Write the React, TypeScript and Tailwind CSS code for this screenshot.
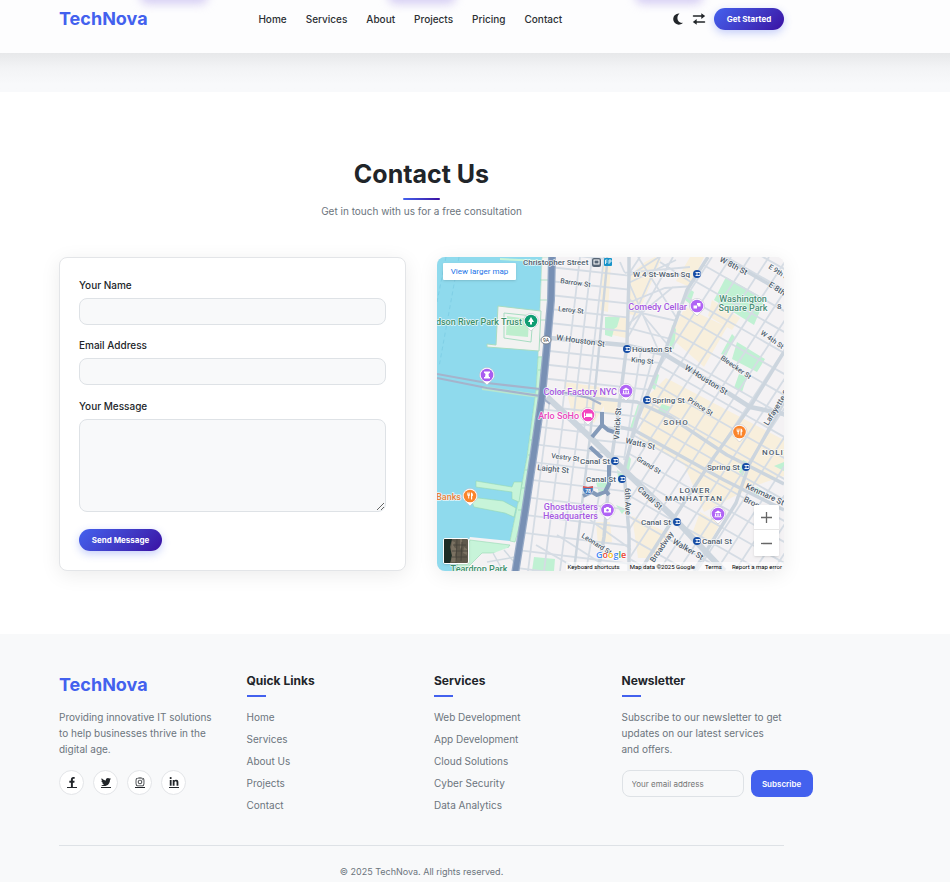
import React from "react";
import { FaFacebookF, FaTwitter, FaInstagram, FaLinkedinIn } from "react-icons/fa";

const navItems = ["Home", "Services", "About", "Projects", "Pricing", "Contact"];
const quickLinks = ["Home", "Services", "About Us", "Projects", "Contact"];
const services = ["Web Development", "App Development", "Cloud Solutions", "Cyber Security", "Data Analytics"];
const socials = [
  { name: "Facebook", Icon: FaFacebookF },
  { name: "Twitter", Icon: FaTwitter },
  { name: "Instagram", Icon: FaInstagram },
  { name: "LinkedIn", Icon: FaLinkedinIn },
];

function MoonIcon() {
  return (
    <svg viewBox="0 0 11 12" className="h-3 w-[11px]" aria-hidden="true">
      <path d="M6.500.5A5.600 5.600 0 1 0 10 9.800C6.800 10.300 4.400 8.300 4.400 5.300 4.400 3.200 5.200 1.500 6.500.5z" fill="currentColor" />
    </svg>
  );
}

function SwapIcon() {
  return (
    <svg viewBox="0 0 14 12" className="h-3 w-3.5" aria-hidden="true">
      <path d="M1.500 3.100H10M4 8.900h8.500" stroke="currentColor" strokeWidth="1.500" strokeLinecap="round" />
      <path d="M9.300.3 13.200 3.100 9.300 5.900zM4.700 6.100.8 8.900l3.900 2.800z" fill="currentColor" />
    </svg>
  );
}

function Header() {
  return (
    <header className="relative bg-[#fdfdfe] pb-[23px] pl-[59px] pr-[166px] pt-2">
      <div className="pointer-events-none absolute inset-x-0 top-0 h-8 overflow-hidden" aria-hidden="true">
        <div className="absolute -top-3 left-[140px] h-4 w-[68px] rounded-full bg-[#d5cdf3] blur-[5px]" />
        <div className="absolute -top-3 left-[388px] h-4 w-[68px] rounded-full bg-[#d5cdf3] blur-[5px]" />
        <div className="absolute -top-3 left-[635px] h-4 w-[68px] rounded-full bg-[#d5cdf3] blur-[5px]" />
      </div>
      <div className="relative flex h-[22px] items-center justify-between">
        <a href="#home" className="text-lg font-bold leading-[22px] text-[#4361ee]">TechNova</a>
        <nav className="flex gap-[19px] text-[10px] font-medium text-[#2b2f33]">
          {navItems.map((n) => (
            <a key={n} href={"#" + n.toLowerCase()}>{n}</a>
          ))}
        </nav>
        <div className="flex items-center gap-2">
          <button aria-label="Toggle dark mode"><MoonIcon /></button>
          <button aria-label="Switch direction"><SwapIcon /></button>
          <button className="h-[22px] w-[70px] rounded-full bg-linear-135 from-[#4361ee] to-[#3a0ca3] text-[8px] font-bold text-white shadow-[0_3px_8px_rgba(67,97,238,0.3)]">
            Get Started
          </button>
        </div>
      </div>
    </header>
  );
}

const range = (from: number, to: number, step: number) => {
  const out: number[] = [];
  for (let v = from; v <= to; v += step) out.push(v);
  return out;
};

type Label = { x: number; y: number; t: string; r?: number; s?: number; c?: string; a?: "start" | "middle" | "end"; sp?: boolean };

const labels: Label[] = [
  { x: 523, y: 265, t: "Christopher Street", s: 8 },
  { x: 560, y: 283, t: "Barrow St", r: 8, s: 7 },
  { x: 558, y: 311, t: "Leroy St", r: 6, s: 7 },
  { x: 556, y: 340, t: "W Houston St", r: 8, s: 8 },
  { x: 633, y: 277, t: "W 4 St-Wash Sq", s: 8 },
  { x: 632, y: 352, t: "Houston St", s: 8 },
  { x: 631, y: 362, t: "King St", r: 5, s: 7 },
  { x: 684, y: 369, t: "W Houston St", r: 32, s: 8 },
  { x: 652, y: 403, t: "Spring St", s: 8 },
  { x: 687, y: 401, t: "Prince St", r: 32, s: 7 },
  { x: 720, y: 359, t: "Bleecker St", r: 35, s: 7 },
  { x: 760, y: 334, t: "W 4th St", r: 35, s: 7 },
  { x: 719, y: 261, t: "W 8th St", r: 28, s: 8 },
  { x: 768, y: 268, t: "E 9th St", r: 33, s: 7 },
  { x: 768, y: 286, t: "E 8th St", r: 33, s: 8 },
  { x: 777, y: 309, t: "8", s: 8 },
  { x: 768, y: 426, t: "Lafayette St", r: -58, s: 8 },
  { x: 619, y: 440, t: "Varick St", r: -86, s: 8 },
  { x: 625, y: 443, t: "Watts St", r: 13, s: 8 },
  { x: 636, y: 460, t: "Grand St", r: 32, s: 7 },
  { x: 637, y: 490, t: "Canal St", r: 42, s: 8 },
  { x: 625, y: 488, t: "6th Ave", r: 89, s: 8 },
  { x: 551, y: 458, t: "Vestry St", r: 7, s: 7 },
  { x: 537, y: 470, t: "Laight St", r: 6, s: 8 },
  { x: 580, y: 464, t: "Canal St", s: 8 },
  { x: 586, y: 482, t: "Canal St", s: 8 },
  { x: 641, y: 525, t: "Canal St", s: 8 },
  { x: 702, y: 544, t: "Canal St", s: 8 },
  { x: 707, y: 470, t: "Spring St", s: 8 },
  { x: 745, y: 488, t: "Kenmare St", r: 25, s: 8 },
  { x: 743, y: 501, t: "Broome", r: 27, s: 8 },
  { x: 654, y: 563, t: "Broadway", r: -56, s: 8 },
  { x: 672, y: 543, t: "Walker St", r: 30, s: 8 },
  { x: 581, y: 537, t: "Leonard St", r: 32, s: 7 },
  { x: 676, y: 425, t: "SOHO", s: 8, a: "middle", sp: true },
  { x: 762, y: 455, t: "NOLITA", s: 8, sp: true },
  { x: 695, y: 493, t: "LOWER", s: 8, a: "middle", sp: true },
  { x: 694, y: 501, t: "MANHATTAN", s: 8, a: "middle", sp: true },
  { x: 522, y: 325, t: "Hudson River Park Trust", c: "#3c8f6b", a: "end" },
  { x: 743, y: 302, t: "Washington", c: "#4b8f77", a: "middle" },
  { x: 743, y: 311, t: "Square Park", c: "#4b8f77", a: "middle" },
  { x: 479, y: 572, t: "Teardrop Park", c: "#3c8f6b", a: "middle" },
  { x: 687, y: 310, t: "Comedy Cellar", c: "#a557e0", a: "end" },
  { x: 617, y: 395, t: "Color Factory NYC", c: "#a557e0", a: "end" },
  { x: 579, y: 419, t: "Arlo SoHo", c: "#ea45bd", a: "end" },
  { x: 598, y: 510, t: "Ghostbusters", c: "#a557e0", a: "end" },
  { x: 598, y: 519, t: "Headquarters", c: "#a557e0", a: "end" },
  { x: 461, y: 500, t: "Banks", c: "#e8813a", a: "end" },
];

function Pin({ x, y, color, children }: { x: number; y: number; color: string; children: React.ReactNode }) {
  return (
    <g transform={`translate(${x} ${y})`}>
      <path d="M-7.500 0a7.500 7.500 0 1 1 15 0c0 4-4 6-7.500 10C-3.500 6-7.500 4-7.500 0z" fill="#fff" stroke="#b9b9c4" strokeWidth=".5" />
      <circle r="6.300" fill={color} />
      <g fill="#fff">{children}</g>
    </g>
  );
}

const museum = <path d="M-3.500-1 0-3.500 3.500-1zM-3-.5h1.200v2.500H-3zM-.6-.5H.6V2H-.6zM1.800-.5H3V2H1.800zM-3.500 2.300h7v1h-7z" />;
const fork = <path d="M-2.800-3.500h.6v2h.5v-2h.6v2h.5v-2h.6v2.800l-.8.6v2.600h-1V-.1l-1-.6zM1-3.500c1.500 0 2 1.500 2 3L2.200.3v3.200H1z" />;

function MapDrawing() {
  return (
    <svg viewBox="437 257 347 314" preserveAspectRatio="xMidYMid slice" className="absolute inset-0 h-full w-full" role="img" aria-label="Map of Lower Manhattan">
      <defs>
        <clipPath id="west"><path d="M550 257H607L629 277 627 344 664 354 637 420 624 470 547 397z" /></clipPath>
        <clipPath id="village"><path d="M607 257H708L687 290 664 354 627 344 629 277z" /></clipPath>
        <clipPath id="southwest"><path d="M540 390 624 470 629 534 634 571H512z" /></clipPath>
        <clipPath id="east"><path d="M708 257H784V571H632L624 470 637 420 664 354 687 290z" /></clipPath>
      </defs>
      <rect x="437" y="257" width="347" height="314" fill="#f4f2f4" />

      {/* Built-up blocks */}
      <g fill="#f8efdc">
        <path d="M603 262l8 0-3 50-8-2zM608 316l18 2 0 20-18-4zM645 262l10-5 6 3-24 56-8-2 2-40zM690 257l14 0-14 30-14-6z" />
        <path d="M685 307l42 20-23 40-34-30zM712 300l28 18-8 12-24-14z" />
        <path d="M666 378l118 62v36l-30 10-50 26-20-48-45-24 5-40z" />
        <path d="M564 382l36 5 8 12-14 24-22-10zM604 400l14 2-2 14-12-4zM632 516l38 18-14 24h-18zM700 512l20 12-10 18-18-8zM596 522h14l2 20-14 4z" />
      </g>

      {/* Parks */}
      <g fill="#c0f1d3">
        <path d="M726 277l39 22-11 26-40-25zM737 342l28 17-8 13-25-13zM739 374l8 3-5 15-8-4zM732 334l3 3-9 19-5-2z" />
        <path d="M605 317l15 0-3 10-3 2-2 8-7-2zM688 288l6 4-4 12-5-4zM672 325l4 4-2 20-5-2zM655 372l4 3-4 15-3-2zM662 404l9 3-7 8-6-5zM743 460l4 2-4 14-4-4zM757 487l5 4-5 7-5-4zM596 482l10-2 2 10-8 7zM534 557l21 2-1 12h-22zM774 466l10-4v9z" />
        <path d="M638 404l5 2-8 24-5-2zM628 455l3 4-2 12-5-4zM617 470l8 5-6 9zM616 505l10 4-4 5z" />
      </g>

      {/* Street grids */}
      <g fill="none" stroke="#d5dce4" strokeWidth="1.800">
        <g clipPath="url(#west)">
          {range(256, 470, 14).map((y) => <path key={y} d={`M540 ${y - 4}L670 ${y + 10}`} />)}
          {range(560, 584, 12).map((x) => <path key={x} d={`M${x + 20} 257L${x} 430`} />)}
          <path d="M641 350L624 460M655 350L630 440" />
        </g>
        <g clipPath="url(#village)">
          <path d="M607 290l52-33M610 292l66-32M611 310l54-22 30-2M615 335l58-48M640 257l-20 30M660 257l-31 70M673 257l-45 80" />
          <path d="M620 262l40 92M638 257l38 60M605 305l90 20M605 322l85 22M622 290l50 60M600 275l90-8M660 262l40 26" />
        </g>
        <g clipPath="url(#southwest)">
          {range(404, 600, 18).map((y) => <path key={y} d={`M500 ${y}L640 ${y + 17}`} />)}
          {range(538, 580, 16).map((x) => <path key={x} d={`M${x + 13} 390L${x - 10} 571`} />)}
          <path d="M536 545l60 35M557 535l70 45M590 520l45 32M600 490l-14 81" />
        </g>
        <g clipPath="url(#east)">
          {range(80, 620, 21).map((y) => <path key={y} d={`M600 ${y}L800 ${y + 114}`} />)}
          {range(600, 940, 19).map((x) => <path key={x} d={`M${x + 55} 257L${x - 150} 571`} />)}
        </g>
      </g>

      {/* Main roads */}
      <g fill="none" stroke="#ccd5de" strokeWidth="3.500" strokeLinejoin="round">
        <path d="M550 338l74 7 40 9 50 30 36 23 34 7" strokeWidth="4.500" />
        <path d="M547 397l43 40 34 33 46 44 54 57" strokeWidth="6" />
        <path d="M708 257l-21 33-23 64-27 66-13 50 5 64 0 37" />
        <path d="M629 257l0 20-2 67-8 63-9 63-6 67-6 34" />
        <path d="M607 257l0 7-10 106-7 67-16 134" strokeWidth="2.500" />
        <path d="M784 352l-34 55-36 50-44 67-30 47" />
        <path d="M590 398l47 4 33 15 57 38 57 29M614 426l20 4 36 20 54 30 60 30M722 257l62 36M784 402l-35 63-13 38-42 68" />
      </g>
      <g fill="none" stroke="#849ab9" strokeWidth="4" strokeLinejoin="round">
        <path d="M602 412v13l-10 12M602 425l6 5 6 2M590 447l12 11M609 465v19l-4 8-8 3-5-3-9 4M605 490l4 5" />
      </g>

      {/* River, shoreline and piers */}
      <path d="M437 257h105l-4 100-2 33-9 67-5 27-12 57-40-4 -8 20-6 14h-29z" fill="#8fdaed" />
      <path d="M542 257h8l-3 86-4 14-5 0z" fill="#f2f1f1" stroke="#a5dec0" strokeWidth=".6" />
      <g fill="#c7f4d9" stroke="#97d9b4" strokeWidth=".6">
        <path d="M538 357h6l-3 43-10 60-10 60-6 22-5-1 12-57 5-27 9-67z" />
        <path d="M476 481l36 6 2-5h8l-3 20-7-3v-7l-36-5zM470 497l33 4 13 7-2 9-9-4-31-6z" />
        <path d="M470 540l40 5-6 8-22 0-18 18h-10z" />
      </g>
      <path d="M483 557l24-9 13 0-6 23h-42z" fill="#f3f1f3" />
      <path d="M487 562l28-5M493 553l10 18M504 550l10 12" stroke="#d1dae1" strokeWidth="1.500" />
      <path d="M530 440h6M528 455h6M525 470h6M522 488h7M518 510h6M540 280h8M540 300h8M540 320h7M538 370h5M536 390h5" stroke="#97d9b4" strokeWidth=".7" />
      <path d="M498 306l43 5-2 40-52-4v-3l9 1z" fill="#f2f2f1" stroke="#a7dcc1" />
      <path d="M507 316l22 3-1 18-22-2z" fill="#bdeecd" />
      <path d="M504 313l29 3-2 26-27-4z" fill="none" stroke="#a7dcc1" />
      <path d="M500 259l41 2" stroke="#c7f4d9" strokeWidth="2" />
      <path d="M459 257l-20 110M446 257l-9 45" stroke="#79cae2" strokeWidth=".7" strokeDasharray="4 3" />
      <path d="M482 386l57 8v4l-57-8z" fill="#b7e6cf" />
      <path d="M437 374l50 9 53 6 27 4 22 5 12 6M437 378l50 10 53 8 10 8" fill="none" stroke="#a5b3cb" strokeWidth="2.200" />

      <path d="M552 257l-1 43-4 45-5 51-8 56-9 60-10 62" fill="none" stroke="#98abc7" strokeWidth="8" />
      <path d="M552 257l-1 43-4 45-5 51-8 56-9 60-10 62" fill="none" stroke="#7890b4" strokeWidth="5.500" />

      {/* Labels */}
      <g fontFamily="Roboto, 'Liberation Sans', sans-serif" fontWeight="500" stroke="#ffffff" strokeOpacity=".8" strokeWidth="1.400" paintOrder="stroke" strokeLinejoin="round">
        {labels.map((l, i) => (
          <text key={i} transform={`translate(${l.x} ${l.y}) rotate(${l.r ?? 0})`} fontSize={l.s ?? 9} fill={l.c ?? "#505e6e"} textAnchor={l.a ?? "start"} letterSpacing={l.sp ? 1 : undefined}>
            {l.t}
          </text>
        ))}
      </g>

      {/* Transit markers */}
      {[[697, 274], [627, 349], [647, 400], [615, 461], [622, 479], [746, 467], [677, 522], [697, 541]].map(([x, y]) => (
        <g key={`${x}-${y}`} transform={`translate(${x} ${y})`}>
          <circle r="4" fill="#174ea6" />
          <path d="M-1.500-1.500H3M-1.500 1.500H3M0-1.500v3M3-1.500v3" stroke="#fff" strokeWidth=".9" />
        </g>
      ))}
      <rect x="592" y="258" width="9" height="9" rx="2" fill="#566575" />
      <rect x="594" y="260" width="5" height="4" fill="none" stroke="#fff" />
      <rect x="604" y="258" width="8" height="8" rx="1" fill="#1793c9" />
      <path d="M605.500 264v-4h2M605.500 262h2M609 264v-4h2v2h-2" stroke="#fff" fill="none" strokeWidth=".8" />
      <ellipse cx="546" cy="340" rx="5" ry="4" fill="#fff" stroke="#798390" />
      <text x="546" y="342" fontSize="5" textAnchor="middle" fontFamily="Roboto, sans-serif" fill="#333">9A</text>
      <path d="M583 486l5 1 5-1c1 5-1 8-5 9-4-1-6-4-5-9z" fill="#4779ba" stroke="#fff" strokeWidth=".5" />
      <path d="M583 486l5 1 5-1v2h-10z" fill="#dc5454" />
      <text x="588" y="493" fontSize="5" fontWeight="700" textAnchor="middle" fontFamily="Roboto, sans-serif" fill="#fff">78</text>

      <Pin x={531} y={321} color="#109d73"><path d="M0-4l3 5H1v2.500h-2V1h-2z" /></Pin>
      <Pin x={487} y={375} color="#a95df0"><path d="M-3-3.500h6v1.200L1.500-1 2 2h1v1.500h-6V2h1l.5-3L-3-2.300z" /></Pin>
      <Pin x={697} y={306} color="#b064f5"><path d="M-3.500-.5h3.500v3h-3.500zM0-3h3.500V.5H.6V-1H0z" /></Pin>
      <Pin x={626} y={391} color="#b064f5">{museum}</Pin>
      <Pin x={718} y={514} color="#b064f5">{museum}</Pin>
      <Pin x={588} y={415} color="#f344bf"><path d="M-4-2.500h1V1h1v-2.500h5.500c.5 0 .8.500.8 1V3h-1V2h-6.300v1h-1zM-1.800-.8h1.500v1.500h-1.500z" /></Pin>
      <Pin x={607.500} y={510} color="#b064f5"><path d="M-3.500-2h1.500l1-1h2l1 1h1.500v4.500h-7z" /><circle r="1.200" cy=".3" fill="#b064f5" /></Pin>
      <Pin x={739.500} y={432} color="#fa842b">{fork}</Pin>
      <Pin x={470} y={496} color="#fa842b">{fork}</Pin>

      <text x="596" y="558" fontFamily="'Open Sans', sans-serif" fontSize="9" fontWeight="600" stroke="#fff" strokeWidth="1.200" paintOrder="stroke">
        <tspan fill="#4285f4">G</tspan><tspan fill="#ea4335">o</tspan><tspan fill="#fbbc05">o</tspan><tspan fill="#4285f4">g</tspan><tspan fill="#34a853">l</tspan><tspan fill="#ea4335">e</tspan>
      </text>
    </svg>
  );
}

function MapPanel() {
  return (
    <div className="relative min-h-[314px] overflow-hidden rounded-lg bg-[#f4f2f4] shadow-[0_4px_20px_rgba(0,0,0,0.08)] [font-family:Roboto,sans-serif]">
      <MapDrawing />
      <a href="#map" className="absolute left-1.5 top-1.5 flex h-[17px] w-[73px] items-center justify-center whitespace-nowrap rounded-[1px] bg-white text-[8px] text-[#1a73e8] shadow-sm">
        View larger map
      </a>
      <button aria-label="Show satellite imagery" className="absolute bottom-[7px] left-1.5 h-[26px] w-[26px] overflow-hidden rounded-xs border border-white bg-[#5f594c] shadow-sm">
        <svg viewBox="0 0 24 24" className="h-full w-full" aria-hidden="true">
          <path d="M0 0h8L6 8l2 9-2 7H0z" fill="#1d2c25" />
          <path d="M8 2l3 1-1 5 3 2-2 6 2 7H7l1-7-1-6zM16 0h2v8l-2 2zM20 8l3 2v6l-4-2z" fill="#7a7161" />
          <path d="M13 0l-1 24M18 3l-1 19M8 12h16M9 6h13M8 18h15" stroke="#45433a" strokeWidth=".8" />
        </svg>
      </button>
      <div className="absolute bottom-[15px] right-[5px] flex w-[25px] flex-col divide-y divide-[#e6e6e6] rounded-[1px] bg-white text-[#666] shadow-sm">
        <button aria-label="Zoom in" className="flex h-[25px] items-center justify-center">
          <svg viewBox="0 0 11 11" className="h-[11px] w-[11px]"><path d="M0 5.500h11M5.500 0v11" stroke="currentColor" strokeWidth="1.300" /></svg>
        </button>
        <button aria-label="Zoom out" className="flex h-[26px] items-center justify-center">
          <svg viewBox="0 0 11 11" className="h-[11px] w-[11px]"><path d="M0 5.500h11" stroke="currentColor" strokeWidth="1.300" /></svg>
        </button>
      </div>
      <div className="absolute bottom-0 right-0 flex h-[9px] items-center gap-2.5 whitespace-nowrap bg-white/60 px-0.5 text-[6px] leading-[9px] text-black">
        <button>Keyboard shortcuts</button>
        <span>Map data ©2025 Google</span>
        <a href="#terms">Terms</a>
        <a href="#report">Report a map error</a>
      </div>
    </div>
  );
}

const fieldClass = "block w-full rounded-lg border border-[#dee2e6] bg-[#f8f9fa] px-2 text-[10px]";

function Contact() {
  return (
    <section className="bg-white pb-[63px] pl-[59px] pr-[166px] pt-[67px]">
      <div className="mb-[38px] flex flex-col items-center">
        <h2 className="text-[25px] font-bold leading-[30px]">Contact Us</h2>
        <div className="mb-[3px] mt-[9px] h-0.5 w-[37px] rounded-full bg-linear-90 from-[#4361ee] to-[#3a0ca3]" />
        <p className="text-[10px] leading-4 text-[#6c757d]">Get in touch with us for a free consultation</p>
      </div>
      <div className="grid grid-cols-2 gap-[31px]">
        <form className="rounded-lg border border-[#e3e5e8] bg-white p-[19px] shadow-[0_4px_20px_rgba(0,0,0,0.08)]" onSubmit={(e) => e.preventDefault()}>
          <div className="mb-3">
            <label htmlFor="name" className="mb-[5px] block text-[10px] font-medium leading-4">Your Name</label>
            <input id="name" type="text" className={fieldClass + " h-[27px]"} />
          </div>
          <div className="mb-[13px]">
            <label htmlFor="email" className="mb-[5px] block text-[10px] font-medium leading-4">Email Address</label>
            <input id="email" type="email" className={fieldClass + " h-[27px]"} />
          </div>
          <div className="mb-[17px]">
            <label htmlFor="message" className="mb-[5px] block text-[10px] font-medium leading-4">Your Message</label>
            <textarea id="message" className={fieldClass + " h-[93px]"} />
          </div>
          <button className="block h-[22px] w-[83px] rounded-full bg-linear-135 from-[#4361ee] to-[#3a0ca3] text-[8px] font-bold text-white shadow-[0_3px_8px_rgba(67,97,238,0.3)]">
            Send Message
          </button>
        </form>
        <MapPanel />
      </div>
    </section>
  );
}

function FooterHeading({ children }: { children: React.ReactNode }) {
  return (
    <>
      <h3 className="text-xs font-bold leading-4">{children}</h3>
      <div className="mb-3 mt-1.5 h-0.5 w-[19px] bg-[#4361ee]" />
    </>
  );
}

function LinkColumn({ title, items }: { title: string; items: string[] }) {
  return (
    <div>
      <FooterHeading>{title}</FooterHeading>
      <ul className="flex flex-col gap-1.5 text-[10px] leading-4 text-[#6c757d]">
        {items.map((i) => <li key={i}><a href="#top">{i}</a></li>)}
      </ul>
    </div>
  );
}

function Footer() {
  return (
    <footer className="bg-[#f8f9fa] pl-[59px] pr-[166px] pt-[39px]">
      <div className="grid grid-cols-4 gap-[25px]">
        <div>
          <a href="#home" className="mb-3 block text-lg font-bold leading-6 text-[#4361ee]">TechNova</a>
          <p className="mb-[13px] text-[10px] leading-4 text-[#6c757d]">
            Providing innovative IT solutions to help businesses thrive in the digital age.
          </p>
          <div className="flex gap-[9px]">
            {socials.map(({ name, Icon }) => (
              <a key={name} href="#social" aria-label={name} className="flex h-[25px] w-[25px] items-center justify-center rounded-full border border-[#e3e5e8] bg-white">
                <span className="border-b border-[#212529]"><Icon size={10} /></span>
              </a>
            ))}
          </div>
        </div>
        <LinkColumn title="Quick Links" items={quickLinks} />
        <LinkColumn title="Services" items={services} />
        <div>
          <FooterHeading>Newsletter</FooterHeading>
          <p className="mb-[13px] text-[10px] leading-4 text-[#6c757d]">
            Subscribe to our newsletter to get updates on our latest services and offers.
          </p>
          <form className="flex w-max gap-[7px]" onSubmit={(e) => e.preventDefault()}>
            <input type="email" aria-label="Your email address" placeholder="Your email address" className="h-[27px] w-[122px] rounded-lg border border-[#dee2e6] bg-[#f8f9fa] px-[9px] text-[8px] placeholder:text-[#757575]" />
            <button className="h-[27px] w-[62px] rounded-lg bg-[#4361ee] text-[8px] font-semibold text-white">Subscribe</button>
          </form>
        </div>
      </div>
      <div className="mt-8 border-t border-[#dee2e6] pb-[3px] pt-[18px] text-center text-[9px] leading-4 text-[#6c757d]">
        © 2025 TechNova. All rights reserved.
      </div>
    </footer>
  );
}

export default function App() {
  return (
    <div className="overflow-x-hidden bg-[#f8f9fa] font-[Inter,'Liberation_Sans',sans-serif] text-[#212529]">
      <Header />
      <div className="h-[39px] bg-linear-to-b from-[#e7e8ea] via-[#f3f4f6] via-40% to-[#f8f9fb] to-80%" />
      <Contact />
      <Footer />
    </div>
  );
}
